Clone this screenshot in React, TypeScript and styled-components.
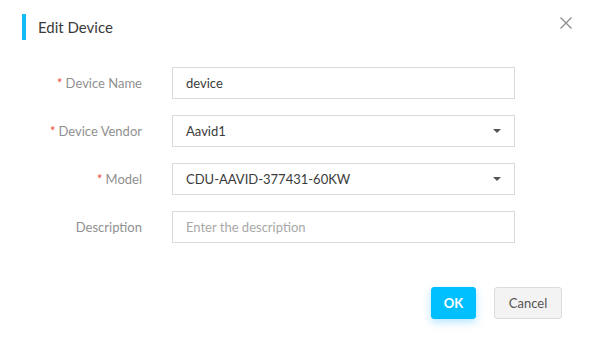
import React from "react";
import styled, { createGlobalStyle } from "styled-components";

const Global = createGlobalStyle`
  html, body { margin: 0; padding: 0; background: #fff; }
  body { font-family: Lato, "Open Sans", sans-serif; }
  * { box-sizing: border-box; }
`;

const Dialog = styled.div`
  position: relative;
  width: 593px;
  height: 346px;
  background: #fff;
`;

const Header = styled.div`
  display: flex;
  align-items: center;
  gap: 12px;
  padding: 14px 0 0 22px;
  height: 40px;
`;

const Accent = styled.span`
  width: 4px;
  height: 26px;
  background: #0fbdf4;
`;

const Title = styled.h1`
  margin: 0;
  font-size: 15px;
  font-weight: 400;
  color: #3a3a3a;
`;

const Close = styled.button`
  position: absolute;
  top: 16px;
  left: 559px;
  width: 14px;
  height: 14px;
  padding: 0;
  border: 0;
  background: none;
  cursor: pointer;
  display: flex;
`;

const Form = styled.div`
  display: grid;
  grid-template-columns: 142px 343px;
  column-gap: 30px;
  row-gap: 16px;
  margin-top: 27px;
`;

const Label = styled.label`
  display: flex;
  align-items: center;
  justify-content: flex-end;
  height: 32px;
  font-size: 13px;
  color: #909090;
`;

const Star = styled.span`
  color: #f04a3e;
  margin-right: 3px;
`;

const Field = styled.div<{ $placeholder?: boolean }>`
  position: relative;
  display: flex;
  align-items: center;
  height: 32px;
  padding: 0 13px;
  border: 1px solid #d9d9e1;
  font-size: 13px;
  color: ${(p) => (p.$placeholder ? "#a8a8a8" : "#3a3a3a")};
`;

const Caret = styled.span`
  position: absolute;
  right: 13px;
  top: 50%;
  margin-top: -2px;
  width: 0;
  height: 0;
  border-left: 4px solid transparent;
  border-right: 4px solid transparent;
  border-top: 4px solid #555;
`;

const Footer = styled.div`
  display: flex;
  justify-content: flex-end;
  gap: 18px;
  padding-right: 31px;
  margin-top: 44px;
`;

const Button = styled.button<{ $primary?: boolean }>`
  height: 32px;
  padding: 0;
  width: ${(p) => (p.$primary ? "45px" : "68px")};
  border-radius: 3px;
  font-family: inherit;
  font-size: 13px;
  font-weight: ${(p) => (p.$primary ? 700 : 400)};
  color: ${(p) => (p.$primary ? "#fff" : "#555")};
  background: ${(p) => (p.$primary ? "#00bfff" : "#f3f3f3")};
  border: 1px solid ${(p) => (p.$primary ? "#00bfff" : "#dcdcdc")};
  box-shadow: ${(p) => (p.$primary ? "0 3px 8px rgba(0,170,255,0.3)" : "none")};
  cursor: pointer;
`;

export default function App() {
  return (
    <>
      <Global />
      <Dialog>
        <Header>
          <Accent />
          <Title>Edit Device</Title>
        </Header>
        <Close aria-label="close">
          <svg width="14" height="14" viewBox="0 0 14 14">
            <path d="M1.5 1.5 L12.5 12.5 M12.5 1.5 L1.5 12.5" stroke="#8c8c8c" strokeWidth="1.3" />
          </svg>
        </Close>
        <Form>
          <Label><Star>*</Star>Device Name</Label>
          <Field>device</Field>
          <Label><Star>*</Star>Device Vendor</Label>
          <Field>Aavid1<Caret /></Field>
          <Label><Star>*</Star>Model</Label>
          <Field>CDU-AAVID-377431-60KW<Caret /></Field>
          <Label>Description</Label>
          <Field $placeholder>Enter the description</Field>
        </Form>
        <Footer>
          <Button $primary>OK</Button>
          <Button>Cancel</Button>
        </Footer>
      </Dialog>
    </>
  );
}
